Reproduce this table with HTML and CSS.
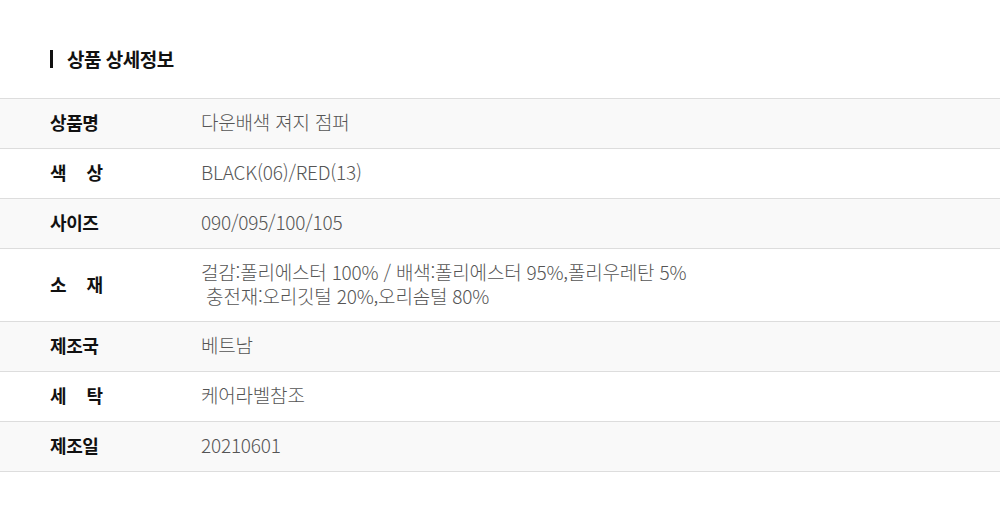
FILE: index.html
```html
<!DOCTYPE html>
<html lang="ko">
<head>
<meta charset="utf-8">
<link rel="stylesheet" href="styles.css">
</head>
<body>
<div class="page">
  <h2 class="title">상품 상세정보</h2>
  <div class="table">
    <div class="row alt"><div class="label">상품명</div><div class="value">다운배색 져지 점퍼</div></div>
    <div class="row"><div class="label spread">색 상</div><div class="value">BLACK(06)/RED(13)</div></div>
    <div class="row alt"><div class="label">사이즈</div><div class="value">090/095/100/105</div></div>
    <div class="row multi"><div class="label spread">소 재</div><div class="value">걸감:폴리에스터 100% / 배색:폴리에스터 95%,폴리우레탄 5%<br>&nbsp;충전재:오리깃털 20%,오리솜털 80%</div></div>
    <div class="row alt"><div class="label">제조국</div><div class="value">베트남</div></div>
    <div class="row"><div class="label spread">세 탁</div><div class="value">케어라벨참조</div></div>
    <div class="row alt"><div class="label">제조일</div><div class="value">20210601</div></div>
  </div>
</div>
</body>
</html>
```

FILE: styles.css
```css
* { box-sizing: border-box; }
html, body { margin: 0; padding: 0; background: #fff; }
body { font-family: "Noto Sans CJK KR", "Noto Sans", sans-serif; color: #111; }
.page { padding-top: 50px; }
.title {
  margin: 0 0 30px 50px;
  padding-left: 14px;
  border-left: 3px solid #111;
  font-size: 19px;
  font-weight: 700;
  line-height: 18px;
  height: 18px;
  display: flex;
  align-items: center;
  letter-spacing: -0.5px;
}
.table { border-top: 1px solid #ddd; }
.row {
  display: flex;
  align-items: center;
  min-height: 50px;
  border-bottom: 1px solid #ddd;
  padding-left: 50px;
  padding-bottom: 3px;
}
.row.alt { background: #f9f9f9; }
.row.multi { padding-top: 11px; padding-bottom: 13px; }
.label {
  width: 151px;
  font-size: 18px;
  font-weight: 700;
  color: #111;
  letter-spacing: -0.4px;
}
.label.spread {
  width: 53px;
  margin-right: 98px;
  text-align: justify;
  text-align-last: justify;
  letter-spacing: 0;
}
.value {
  font-size: 19px;
  font-weight: 300;
  color: #555;
  line-height: 24px;
  letter-spacing: -0.2px;
}
```
